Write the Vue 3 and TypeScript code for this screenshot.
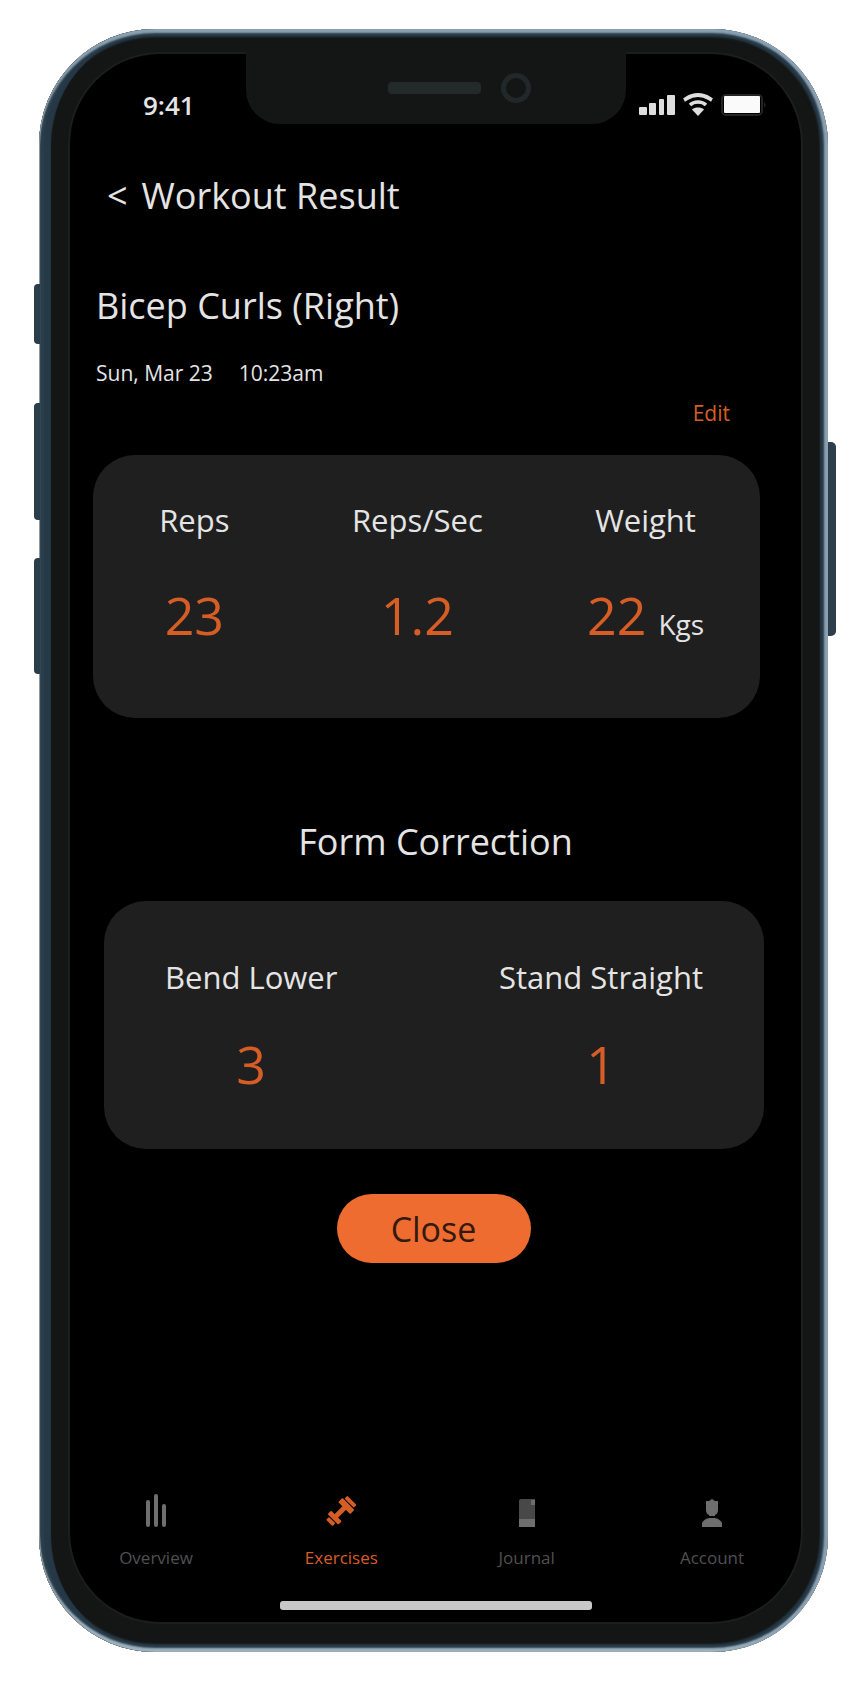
<script setup lang="ts">
interface Metric {
  label: string
  value: string
  unit?: string
}

const metrics: Metric[] = [
  { label: 'Reps', value: '23' },
  { label: 'Reps/Sec', value: '1.2' },
  { label: 'Weight', value: '22', unit: 'Kgs' },
]

const corrections: Metric[] = [
  { label: 'Bend Lower', value: '3' },
  { label: 'Stand Straight', value: '1' },
]

const tabs = [
  { id: 'overview', label: 'Overview' },
  { id: 'exercises', label: 'Exercises' },
  { id: 'journal', label: 'Journal' },
  { id: 'account', label: 'Account' },
]
const activeTab = 'exercises'
</script>

<template>
  <div class="stage">
    <div class="phone">
      <span class="side-key mute"></span>
      <span class="side-key volume-up"></span>
      <span class="side-key volume-down"></span>
      <span class="side-key power"></span>

      <div class="screen">
        <div class="notch">
          <span class="speaker"></span>
          <span class="camera"></span>
        </div>

        <div class="status">
          <span class="clock">9:41</span>
          <div class="indicators">
            <svg width="36" height="22" viewBox="0 0 36 22" fill="#dedede" aria-hidden="true">
              <rect x="0" y="13" width="8" height="8" rx="1" />
              <rect x="10" y="9" width="7" height="12" rx="1" />
              <rect x="20" y="5" width="5" height="16" rx="1" />
              <rect x="28" y="1" width="8" height="20" rx="1" />
            </svg>
            <svg width="30" height="24" viewBox="0 0 30 24" fill="none" stroke="#dedede" aria-hidden="true">
              <path d="M1 7C5 5 7 2 15 2s10 3 14 5" stroke-width="4" />
              <path d="M7 12c4-4 12-4 16 0" stroke-width="3.5" />
              <path d="M9 16.5c3-2.6 9-2.6 12 0L15 23z" fill="#dedede" stroke="none" />
            </svg>
            <svg width="46" height="22" viewBox="0 0 46 22" aria-hidden="true">
              <rect x="1" y="1" width="40" height="20" rx="4" fill="none" stroke="#242424" stroke-width="2" />
              <rect x="3" y="2" width="36" height="17" rx="1" fill="#fafafa" />
              <path d="M43 8q3 3 0 6z" fill="#242424" />
            </svg>
          </div>
        </div>

        <header class="topbar">
          <button class="back" type="button" aria-label="Back">&lt;</button>
          <h1>Workout Result</h1>
        </header>

        <h2 class="exercise">Bicep Curls (Right)</h2>
        <p class="when"><span>Sun, Mar 23</span><span>10:23am</span></p>
        <div class="edit-row"><button class="edit" type="button">Edit</button></div>

        <dl class="card metrics">
          <div v-for="m in metrics" :key="m.label" class="metric">
            <dt>{{ m.label }}</dt>
            <dd>{{ m.value }}<span v-if="m.unit" class="unit">{{ m.unit }}</span></dd>
          </div>
        </dl>

        <h2 class="form-title">Form Correction</h2>

        <dl class="card corrections">
          <div v-for="c in corrections" :key="c.label" class="metric">
            <dt>{{ c.label }}</dt>
            <dd>{{ c.value }}</dd>
          </div>
        </dl>

        <div class="actions"><button class="close" type="button">Close</button></div>

        <nav class="tabs">
          <a
            v-for="t in tabs"
            :key="t.id"
            :href="'#' + t.id"
            :class="['tab', { active: t.id === activeTab }]"
          >
            <svg width="36" height="36" viewBox="0 0 36 36" fill="currentColor" aria-hidden="true">
              <g v-if="t.id === 'overview'">
                <rect x="8" y="8" width="4" height="27" rx="2" />
                <rect x="16" y="2" width="4" height="33" rx="2" />
                <rect x="24" y="12" width="4" height="23" rx="2" />
              </g>
              <g v-else-if="t.id === 'exercises'">
                <g transform="rotate(-45 18 20)">
                  <rect x="11" y="17" width="14" height="5" />
                  <rect x="2" y="15" width="4" height="9" rx="1" />
                  <rect x="7" y="12" width="5" height="15" rx="1" />
                  <rect x="23" y="11" width="6" height="17" rx="1" />
                  <rect x="30" y="13" width="4" height="13" rx="1" />
                </g>
              </g>
              <g v-else-if="t.id === 'journal'">
                <path d="M10 9q0-2 2-2h14v20H10z" opacity=".65" />
                <path d="M10 27h16v8H10zM22 8h4v5h-4z" />
              </g>
              <g v-else>
                <path d="M18 7l3 2h3v9q0 4-3 5v1h-6v-1q-3-1-3-5V9h3z" />
                <path d="M8 35v-4q2-4 7-5h6q5 1 7 5v4z" />
              </g>
            </svg>
            <span>{{ t.label }}</span>
          </a>
        </nav>
        <div class="home-bar"></div>
      </div>
    </div>
  </div>
</template>

<style>
body {
  margin: 0;
  background: #fff;
}
</style>

<style scoped>
.stage {
  padding: 29px 34px 44px 39px;
  font-family: "Open Sans", "Noto Sans", sans-serif;
  color: #e4e4e4;
}
.phone {
  position: relative;
  padding: 25px 27px 30px 31px;
  border-radius: 116px;
  background: #141615;
  box-shadow:
    inset 1px 0 0 #8d979d,
    inset -4px 0 2px #8ba0b1,
    inset 0 4px 2px #8ba2b1,
    inset 0 -4px 2px #9fb2bf,
    inset 5px 0 0 #2a3d4a,
    inset 0 0 2px 8px #263947,
    inset 12px 0 1px #263947;
}
.side-key {
  position: absolute;
  left: -5px;
  width: 6px;
  border-radius: 4px 0 0 4px;
  background: #2a3d4a;
}
.mute {
  top: 255px;
  height: 60px;
}
.volume-up {
  top: 374px;
  height: 117px;
}
.volume-down {
  top: 529px;
  height: 116px;
}
.power {
  top: 413px;
  left: auto;
  right: -8px;
  width: 8px;
  height: 194px;
  border-radius: 0 5px 5px 0;
  background: #2c3e4c;
}
.screen {
  position: relative;
  display: flex;
  flex-direction: column;
  padding-bottom: 12px;
  border-radius: 90px;
  background: #000;
  box-shadow: 0 0 0 2px #1c1e1d;
}
.notch {
  position: absolute;
  top: -2px;
  left: 50%;
  width: 380px;
  height: 72px;
  margin-left: -190px;
  border-radius: 0 0 34px 34px;
  background: #141615;
}
.speaker {
  position: absolute;
  top: 30px;
  left: 142px;
  width: 93px;
  height: 12px;
  border-radius: 4px;
  background: #24292a;
}
.camera {
  position: absolute;
  top: 21px;
  left: 255px;
  box-sizing: border-box;
  width: 30px;
  height: 30px;
  border: 5px solid #22282a;
  border-radius: 50%;
}
.status {
  display: flex;
  align-items: center;
  justify-content: space-between;
  height: 40px;
  margin-top: 31px;
  padding: 0 34px 0 73px;
}
.clock {
  font-size: 26px;
  font-weight: 600;
  line-height: 40px;
}
.indicators {
  display: flex;
  align-items: center;
  gap: 8px;
}
.topbar {
  display: flex;
  gap: 14px;
  margin-top: 47px;
  padding-left: 37px;
}
h1,
h2,
p,
dl,
dd {
  margin: 0;
}
h1,
h2 {
  font-size: 36px;
  font-weight: 400;
  line-height: 48px;
}
button {
  padding: 0;
  border: 0;
  background: none;
  font-family: inherit;
  color: inherit;
}
.back {
  font-size: 36px;
  line-height: 48px;
}
.exercise {
  margin-top: 62px;
  padding-left: 26px;
}
.when {
  display: flex;
  gap: 26px;
  margin-top: 27px;
  padding-left: 26px;
  font-size: 21px;
  line-height: 32px;
}
.edit-row {
  display: flex;
  justify-content: flex-end;
  margin-top: 10px;
  padding-right: 71px;
}
.edit {
  font-size: 21px;
  line-height: 28px;
  color: #d65d25;
}
.card {
  border-radius: 42px;
  background: #1f1f1f;
}
.metrics {
  display: grid;
  grid-template-columns: 20fr 24fr 21fr;
  margin: 28px 41px 0 23px;
  padding: 45px 8px 71px 0;
}
.corrections {
  display: flex;
  justify-content: space-between;
  margin: 35px 37px 0 34px;
  padding: 56px 61px 53px 61px;
}
.metric {
  display: flex;
  flex-direction: column;
  align-items: center;
  gap: 43px;
}
.corrections .metric {
  gap: 35px;
}
dt {
  font-size: 31px;
  line-height: 40px;
}
dd {
  display: flex;
  align-items: baseline;
  gap: 12px;
  font-size: 52px;
  line-height: 64px;
  color: #d65d25;
}
.unit {
  font-size: 28px;
  line-height: 32px;
  color: #e4e4e4;
}
.form-title {
  margin-top: 100px;
  text-align: center;
}
.actions {
  display: flex;
  justify-content: center;
  margin-top: 45px;
  padding-right: 4px;
}
.close {
  width: 194px;
  height: 69px;
  border-radius: 35px;
  background: #ee6c2f;
  font-size: 34px;
  line-height: 48px;
  color: #35190c;
}
.tabs {
  display: flex;
  justify-content: space-between;
  margin-top: 229px;
  padding: 0 45px 0 42px;
}
.tab {
  display: flex;
  flex-direction: column;
  align-items: center;
  gap: 18px;
  width: 88px;
  font-size: 17px;
  line-height: 24px;
  color: #6e6e6e;
  text-decoration: none;
}
.tab span {
  color: #505050;
}
.tab.active,
.tab.active span {
  color: #d65d25;
}
.home-bar {
  align-self: center;
  width: 312px;
  height: 9px;
  margin-top: 31px;
  border-radius: 3px;
  background: #c8c8c8;
}
</style>
